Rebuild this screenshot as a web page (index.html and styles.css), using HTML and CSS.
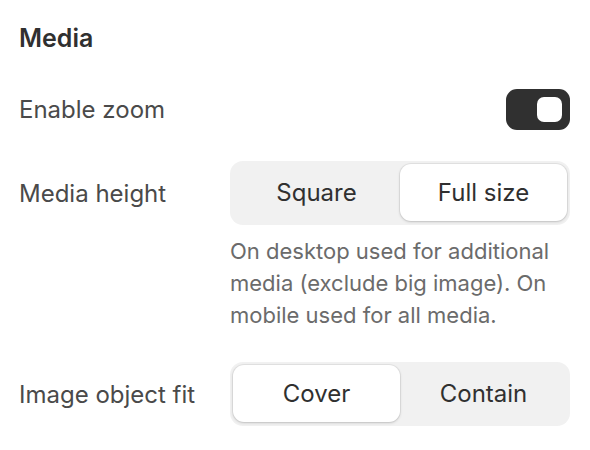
FILE: index.html
```html
<!DOCTYPE html>
<html lang="en">
<head>
<meta charset="UTF-8" />
<title>Media settings</title>
<link rel="stylesheet" href="styles.css">
</head>
<body>

<div class="panel">
  <h2 class="panel-title">Media</h2>

  <div class="setting">
    <span class="setting-label">Enable zoom</span>
    <div class="setting-control end">
      <span class="toggle on"><span class="knob"></span></span>
    </div>
  </div>

  <div class="setting">
    <span class="setting-label">Media height</span>
    <div class="setting-control">
      <div class="segmented">
        <button class="segment">Square</button>
        <button class="segment active">Full size</button>
      </div>
    </div>
  </div>
  <p class="setting-help">On desktop used for additional media (exclude big image). On mobile used for all media.</p>

  <div class="setting last">
    <span class="setting-label">Image object fit</span>
    <div class="setting-control">
      <div class="segmented">
        <button class="segment active">Cover</button>
        <button class="segment">Contain</button>
      </div>
    </div>
  </div>
</div>

</body>
</html>
```

FILE: styles.css
```css
body {
  margin: 0;
  background: #ffffff;
  font-family: Inter, 'Noto Sans', sans-serif;
  color: #303030;
}
.panel {
  padding: 22px 20px 0 19px;
}
.panel-title {
  margin: 0;
  font-size: 25px;
  font-weight: 600;
  line-height: 32px;
  color: #303030;
}
.setting {
  display: grid;
  grid-template-columns: 211px 1fr;
  align-items: center;
  margin-top: 35px;
}
.setting + .setting {
  margin-top: 31px;
}
.setting.last {
  margin-top: 31px;
}
.setting-label {
  font-size: 24px;
  color: #4a4a4a;
}
.setting-control.end {
  display: flex;
  justify-content: flex-end;
}
.toggle {
  display: flex;
  justify-content: flex-end;
  align-items: center;
  width: 64px;
  height: 41px;
  padding: 0 8px;
  box-sizing: border-box;
  border-radius: 11px;
  background: #303030;
}
.knob {
  width: 25px;
  height: 25px;
  border-radius: 7px;
  background: #ffffff;
}
.segmented {
  display: grid;
  grid-template-columns: 1fr 1fr;
  padding: 3px 3px 4px;
  border-radius: 13px;
  background: #f1f1f1;
}
.segment {
  height: 57px;
  border: none;
  border-radius: 11px;
  background: transparent;
  font-family: inherit;
  font-size: 24px;
  color: #303030;
  cursor: pointer;
}
.segment.active {
  background: #ffffff;
  box-shadow: 0 1px 3px rgba(0, 0, 0, 0.16), 0 0 0 1px rgba(0, 0, 0, 0.05);
}
.setting-help {
  margin: 10px 0 0 211px;
  font-size: 22px;
  line-height: 32px;
  color: #6b6b6b;
}
```
